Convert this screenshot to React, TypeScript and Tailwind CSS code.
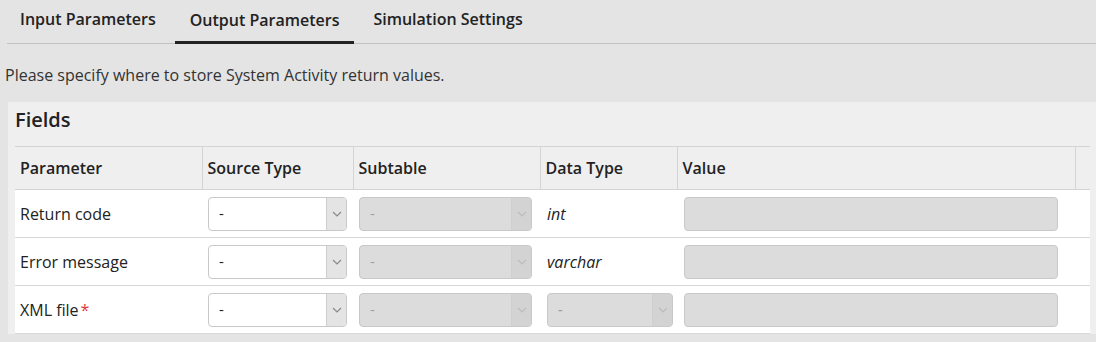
import React from "react";

const tabs = ["Input Parameters", "Output Parameters", "Simulation Settings"];

const rows = [
  { name: "Return code", required: false, dataType: "int" },
  { name: "Error message", required: false, dataType: "varchar" },
  { name: "XML file", required: true, dataType: null },
];

function Chevron({ color }: { color: string }) {
  return (
    <svg width="10" height="6" viewBox="0 0 10 6" fill="none">
      <path d="M1 1l4 4 4-4" stroke={color} strokeWidth="1.2" />
    </svg>
  );
}

function Select({ width, disabled }: { width: string; disabled?: boolean }) {
  return (
    <div
      className={
        "flex h-[34px] items-stretch overflow-hidden rounded-[4px] border border-[#c9c9c9] " +
        width +
        (disabled ? " bg-[#dcdcdc]" : " bg-white")
      }
    >
      <span
        className={
          "flex flex-1 items-center pl-[10px] text-[15px] " +
          (disabled ? "text-[#a0a0a0]" : "text-[#222]")
        }
      >
        -
      </span>
      <span
        className={
          "flex w-[20px] items-center justify-center border-l border-[#cfcfcf] " +
          (disabled ? "bg-[#d3d3d3]" : "bg-[#e4e4e4]")
        }
      >
        <Chevron color={disabled ? "#bcbcbc" : "#8a8a8a"} />
      </span>
    </div>
  );
}

export default function App() {
  return (
    <div
      className="h-[342px] w-[1096px] overflow-hidden bg-[#e4e4e4] text-[#222]"
      style={{ fontFamily: '"Open Sans", "Liberation Sans", sans-serif' }}
    >
      {/* tabs */}
      <div className="ml-[7px] flex h-[44px] gap-[4px] border-b border-[#c2c2c2]">
        {tabs.map((t, i) => (
          <div
            key={t}
            className={
              "flex items-center px-[15px] pb-[5px] text-[16px] font-semibold " +
              (i === 0 ? "-ml-[2px] " : "") +
              (i === 1 ? "border-b-[3px] border-[#222] mb-[-1px] pt-[3px] pb-[5px]" : "")
            }
          >
            {t}
          </div>
        ))}
      </div>

      <p className="mt-[19px] pl-[5px] text-[16px] text-[#333]">
        Please specify where to store System Activity return values.
      </p>

      {/* fields panel */}
      <div className="ml-[8px] mt-[15px] bg-[#efefef] pl-[7px] pr-[6px] pt-[4px]">
        <h2 className="h-[40px] text-[20px] font-semibold leading-[28px]">Fields</h2>
        <table className="w-[1075px] table-fixed border-collapse text-[16px]">
          <colgroup>
            <col className="w-[187px]" />
            <col className="w-[151px]" />
            <col className="w-[187px]" />
            <col className="w-[137px]" />
            <col className="w-[398px]" />
            <col className="w-[15px]" />
          </colgroup>
          <thead>
            <tr className="h-[43px] border-t border-b border-[#d4d4d4]">
              {["Parameter", "Source Type", "Subtable", "Data Type", "Value", ""].map((h, i) => (
                <th
                  key={i}
                  className={
                    "px-[5px] text-left text-[16px] font-semibold " +
                    (i < 5 ? "border-r border-[#d4d4d4]" : "")
                  }
                >
                  {h}
                </th>
              ))}
            </tr>
          </thead>
          <tbody className="bg-white">
            {rows.map((r) => (
              <tr key={r.name} className="h-[48px] border-b border-[#d8d8d8]">
                <td className="px-[5px] text-[16px]">
                  {r.name}
                  {r.required && <span className="ml-[2px] text-[#e0393b]">*</span>}
                </td>
                <td className="px-[6px]">
                  <Select width="w-[139px]" />
                </td>
                <td className="px-[6px]">
                  <Select width="w-[173px]" disabled />
                </td>
                <td className="px-[7px] text-[16px] italic">
                  {r.dataType ?? <Select width="w-[126px]" disabled />}
                </td>
                <td className="px-[7px]" colSpan={2}>
                  <div className="h-[34px] w-[374px] rounded-[4px] border border-[#c9c9c9] bg-[#dcdcdc]" />
                </td>
              </tr>
            ))}
          </tbody>
        </table>
      </div>
    </div>
  );
}
